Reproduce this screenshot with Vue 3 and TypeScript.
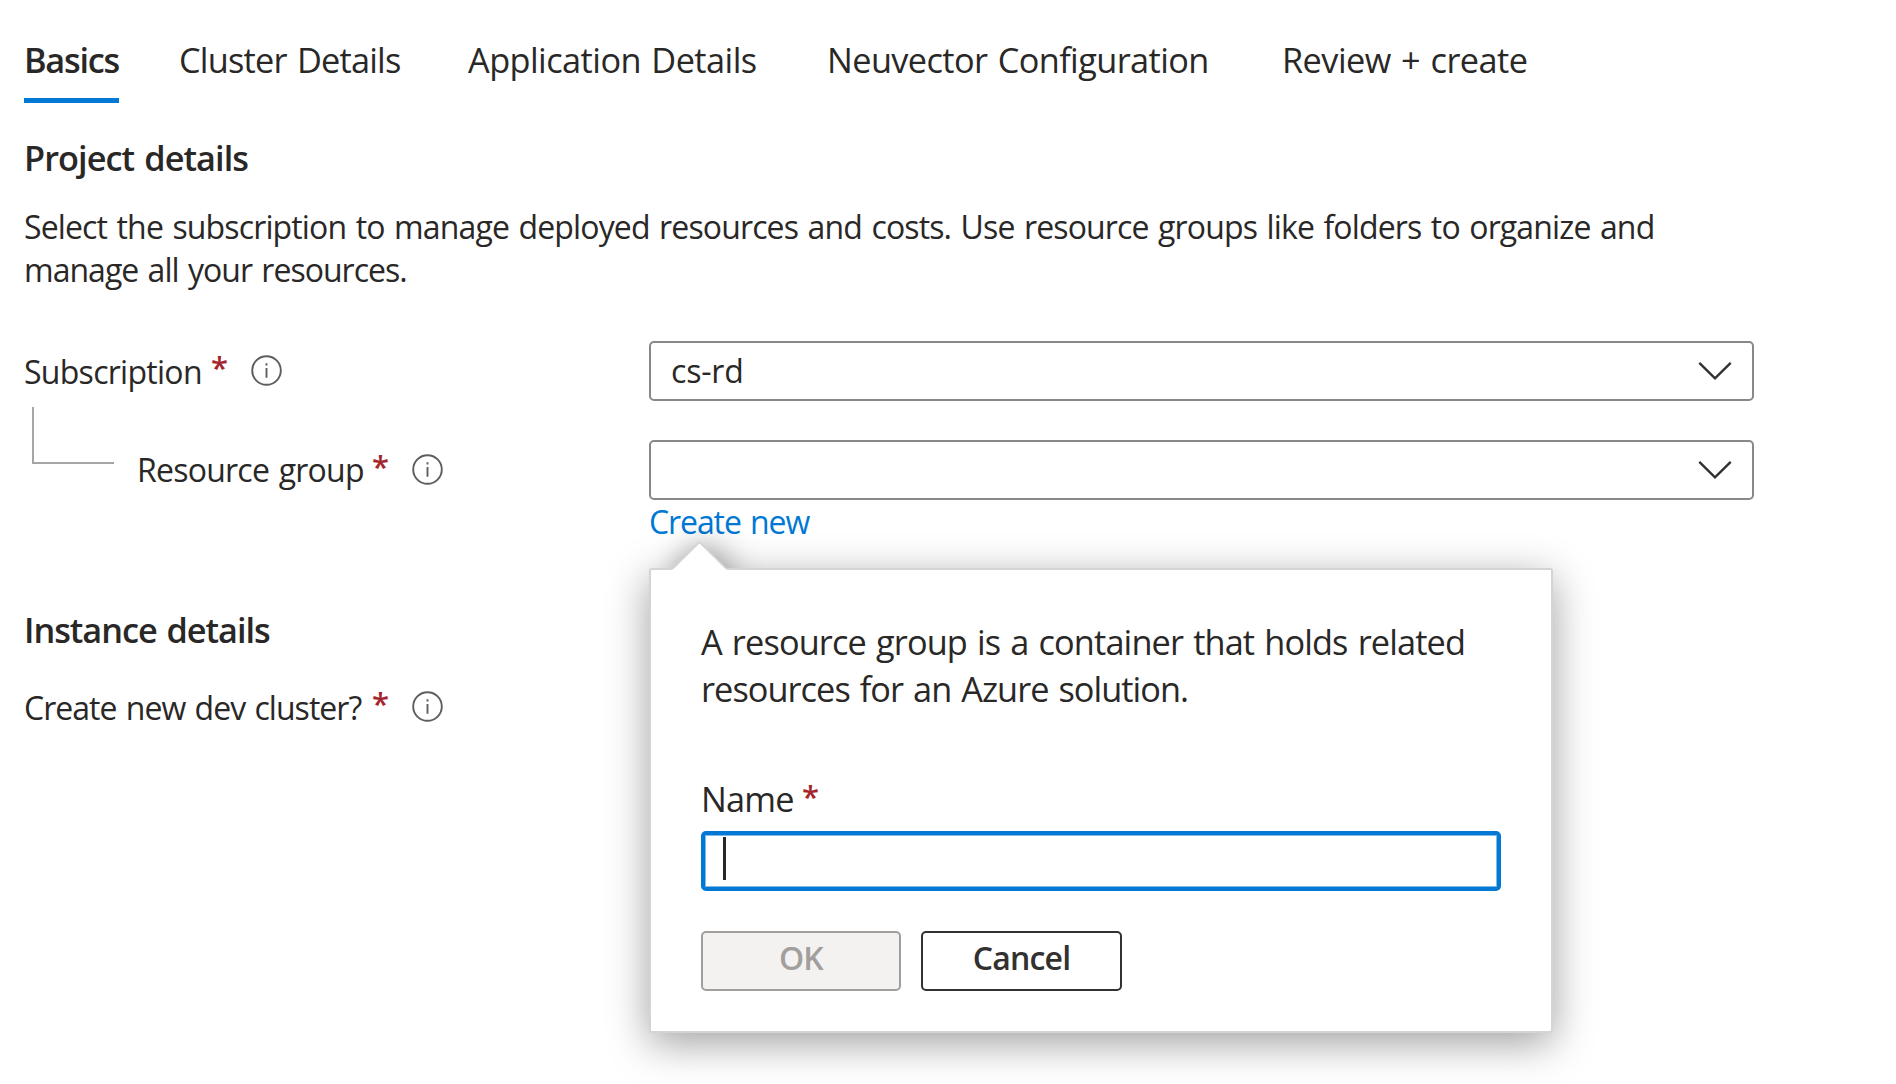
<script setup lang="ts">
import { ref } from 'vue'

interface Tab {
  id: string
  label: string
}

const tabs: Tab[] = [
  { id: 'basics', label: 'Basics' },
  { id: 'cluster', label: 'Cluster Details' },
  { id: 'application', label: 'Application Details' },
  { id: 'neuvector', label: 'Neuvector Configuration' },
  { id: 'review', label: 'Review + create' },
]

const activeTab = ref('basics')
const subscription = ref('cs-rd')
const resourceGroup = ref('')
</script>

<template>
  <main class="page">
    <nav class="tabs">
      <div v-for="tab in tabs" :key="tab.id" class="tab-cell">
        <a class="tab" :class="[tab.id, { active: tab.id === activeTab }]" @click="activeTab = tab.id">{{ tab.label }}</a>
      </div>
    </nav>

    <h2 class="heading project">Project details</h2>
    <p class="intro">
      <span class="intro-first">Select the subscription to manage deployed resources and costs. Use resource groups like folders to organize and</span><br />
      <span class="intro-last">manage all your resources.</span>
    </p>

    <div class="row subscription-row">
      <div class="label">
        <span class="label-text sub-text">Subscription</span>
        <span class="required">*</span>
        <svg class="info" viewBox="0 0 31 31">
          <circle cx="15.5" cy="15.5" r="14.3" />
          <path d="M15.5 13v9.8M15.5 8.2v2.2" />
        </svg>
      </div>
      <div class="select">
        <span class="value">{{ subscription }}</span>
        <svg class="chevron" viewBox="0 0 34 20"><path d="M1.3 1.8 17 17.3 32.7 1.8" /></svg>
      </div>
    </div>

    <div class="row group-row">
      <div class="label">
        <span class="branch"></span>
        <span class="label-text group-text">Resource group</span>
        <span class="required">*</span>
        <svg class="info" viewBox="0 0 31 31">
          <circle cx="15.5" cy="15.5" r="14.3" />
          <path d="M15.5 13v9.8M15.5 8.2v2.2" />
        </svg>
      </div>
      <div class="field">
        <div class="select">
          <span class="value">{{ resourceGroup }}</span>
          <svg class="chevron" viewBox="0 0 34 20"><path d="M1.3 1.8 17 17.3 32.7 1.8" /></svg>
        </div>
        <a class="create-link">Create new</a>

        <div class="callout">
          <div class="beak-shadow"></div>
          <div class="panel">
            <p class="hint">
              <span class="hint-first">A resource group is a container that holds related</span><br />
              <span class="hint-last">resources for an Azure solution.</span>
            </p>
            <div class="name-label">
              <span class="name-text">Name</span>
              <span class="required">*</span>
            </div>
            <div class="name-input"><span class="caret"></span></div>
            <div class="actions">
              <button class="button ok" disabled>OK</button>
              <button class="button cancel">Cancel</button>
            </div>
          </div>
          <svg class="beak" viewBox="0 0 60 30">
            <path class="beak-fill" d="M2 30 30.5 1.5 59 30Z" />
            <path class="beak-edge" d="M4 27.3 30.5 1.2 57 27.3" />
          </svg>
        </div>
      </div>
    </div>

    <h2 class="heading instance">Instance details</h2>
    <div class="row cluster-row">
      <div class="label">
        <span class="label-text cluster-text">Create new dev cluster?</span>
        <span class="required">*</span>
        <svg class="info" viewBox="0 0 31 31">
          <circle cx="15.5" cy="15.5" r="14.3" />
          <path d="M15.5 13v9.8M15.5 8.2v2.2" />
        </svg>
      </div>
    </div>
  </main>
</template>

<style>
body {
  background: #fff;
  overflow: hidden;
}
</style>

<style scoped>
.page {
  box-sizing: border-box;
  width: 1896px;
  height: 1084px;
  padding: 36px 0 0 24px;
  overflow: hidden;
  color: #292827;
  font-family: 'Open Sans', 'Noto Sans', sans-serif;
  font-size: 32px;
  line-height: 43px;
  word-spacing: 2px;
}

.tabs {
  display: grid;
  grid-template-columns: 155px 289px 359px 455px auto;
  font-size: 34.3px;
  line-height: 47px;
  white-space: nowrap;
}
.tab {
  display: inline-block;
  box-sizing: border-box;
  height: 67px;
  border-bottom: 5px solid transparent;
}
.tab.active {
  width: 95px;
  border-color: #0078d4;
  font-weight: 600;
}
.tab.basics { letter-spacing: -1.24px; }
.tab.cluster { letter-spacing: -0.77px; }
.tab.application { letter-spacing: -0.55px; }
.tab.neuvector { letter-spacing: -0.6px; }
.tab.review { letter-spacing: -0.55px; }
.tab-cell { height: 67px; }

.heading {
  margin: 0;
  font-size: 34.3px;
  font-weight: 600;
  line-height: 47px;
}
.project {
  margin-top: 31px;
  letter-spacing: -0.93px;
}
.instance {
  margin-top: 63px;
  letter-spacing: -1.04px;
}

.intro {
  margin: 24px 0 0;
  white-space: nowrap;
}
.intro-first { letter-spacing: -0.862px; }
.intro-last { letter-spacing: -0.98px; }

.row { display: flex; }
.subscription-row { margin-top: 50px; }
.group-row { margin-top: 39px; }
.cluster-row { margin-top: 19px; }

.label {
  display: flex;
  flex: none;
  width: 625px;
  white-space: nowrap;
}
.label-text { padding-top: 9px; }
.sub-text { width: 187px; letter-spacing: -0.718px; }
.group-text { width: 235px; padding-top: 8px; letter-spacing: -0.76px; }
.cluster-text { width: 348px; padding-top: 14px; letter-spacing: -0.98px; }

.required {
  flex: none;
  width: 39.6px;
  color: #a4262c;
  font-size: 31px;
  font-weight: 600;
}
.label .required { padding-top: 5px; }
.cluster-row .required { padding-top: 10px; }

.info {
  flex: none;
  width: 31px;
  height: 31px;
  margin-top: 14px;
  fill: none;
  stroke: #605e5c;
  stroke-width: 1.9;
}
.cluster-row .info { margin-top: 19px; }

.branch {
  box-sizing: border-box;
  flex: none;
  width: 82px;
  height: 57px;
  margin: -33px 23px 0 8px;
  border: solid #a6a6a6;
  border-width: 0 0 2px 2px;
}

.field { position: relative; }
.select {
  display: flex;
  box-sizing: border-box;
  align-items: flex-start;
  justify-content: space-between;
  width: 1105px;
  height: 60px;
  padding: 6px 20px 0;
  border: 2px solid #8a8886;
  border-radius: 5px;
}
.value { letter-spacing: -0.2px; }
.chevron {
  width: 34px;
  height: 20px;
  margin-top: 12px;
  fill: none;
  stroke: #323130;
  stroke-width: 2.4;
}
.create-link {
  display: block;
  color: #0078d4;
  letter-spacing: -1.09px;
}

.callout {
  position: absolute;
  top: 128px;
  left: 0;
}
.beak-shadow {
  position: absolute;
  top: -18px;
  left: 31px;
  width: 40px;
  height: 40px;
  box-shadow: 7px -7px 34px rgba(0, 0, 0, 0.2), 0 0 30px rgba(0, 0, 0, 0.25);
  transform: rotate(45deg);
}
.panel {
  position: relative;
  box-sizing: border-box;
  width: 904px;
  height: 465px;
  padding: 48px 50px 0;
  border: 2px solid #d4d4d4;
  border-radius: 3px;
  background: #fff;
  box-shadow: 0 10px 42px rgba(0, 0, 0, 0.38);
  font-size: 34.3px;
  line-height: 47px;
}
.beak {
  position: absolute;
  top: -27px;
  left: 20px;
  width: 60px;
  height: 30px;
}
.beak-fill { fill: #fff; }
.beak-edge {
  fill: none;
  stroke: #d4d4d4;
  stroke-width: 1.8;
}

.hint {
  margin: 0;
  white-space: nowrap;
}
.hint-first { letter-spacing: -0.865px; }
.hint-last { letter-spacing: -0.95px; }

.name-label {
  display: flex;
  margin-top: 63px;
}
.name-text {
  width: 101px;
  letter-spacing: -0.811px;
}
.name-label .required { line-height: 42px; }

.name-input {
  box-sizing: border-box;
  height: 60px;
  width: 800px;
  margin-top: 9px;
  padding: 2px 0 0 18px;
  border: 4px solid #0078d4;
  border-radius: 5px;
  box-shadow: inset 0 0 0 1px #7fbbe9;
}
.caret {
  display: block;
  width: 3px;
  height: 43px;
  background: #292827;
}

.actions {
  display: flex;
  gap: 20px;
  margin-top: 40px;
}
.button {
  box-sizing: border-box;
  width: 200px;
  height: 60px;
  padding: 0 0 7px;
  border: 2px solid #323130;
  border-radius: 5px;
  background: #fff;
  color: #323130;
  font: 600 32px/43px 'Open Sans', 'Noto Sans', sans-serif;
  letter-spacing: -0.82px;
}
.ok {
  border-color: #a19f9d;
  background: #f3f2f1;
  color: #a19f9d;
}
.cancel { width: 201px; }
</style>
